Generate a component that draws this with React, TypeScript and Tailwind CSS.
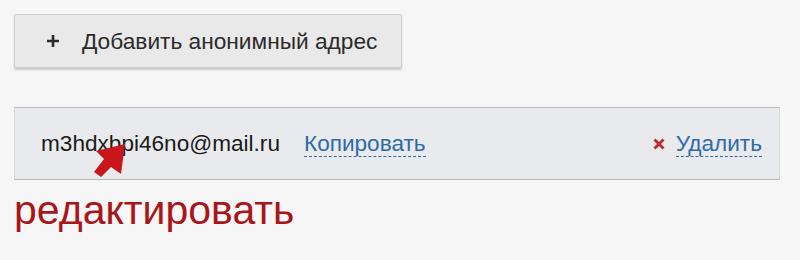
const FONT = { fontFamily: '"Liberation Sans", Arial, sans-serif' };

const PlusIcon = () => (
  <svg width="14" height="14" viewBox="0 0 14 14" className="shrink-0">
    <path d="M7 1v12M1 7h12" stroke="#2b2b2b" strokeWidth="2.6" />
  </svg>
);

const CrossIcon = () => (
  <svg width="12" height="12" viewBox="0 0 12 12" className="shrink-0">
    <path d="M1.5 1.5l9 9M10.5 1.5l-9 9" stroke="#c4262c" strokeWidth="2.8" />
  </svg>
);

// annotation arrow drawn over the address
const PointerArrow = () => (
  <svg width="40" height="40" viewBox="0 0 40 40" className="absolute left-[90px] top-[139px]">
    <polygon points="35,5 6,12 14,20 4,33 11,38 21,28 31,35" fill="#c8161d" />
  </svg>
);

export default function App() {
  return (
    <div className="w-[800px] h-[260px] bg-[#f6f6f6] px-[14px] pt-[14px] relative overflow-hidden" style={FONT}>
      <button className="w-[388px] h-[54px] flex items-center gap-[22px] pl-[31px] bg-[#e9e9e9] border border-[#cfcfcf] rounded-[2px] shadow-[0_2px_2px_rgba(0,0,0,0.18)] text-[#2b2b2b] text-[22.7px]">
        <PlusIcon />
        <span>Добавить анонимный адрес</span>
      </button>

      <div className="mt-[39px] w-[766px] h-[73px] flex items-center pl-[26px] pr-[17px] bg-[#e8eaed] border-y border-[#b9b9b9] border-x border-x-[#d8d8d8] text-[22.6px]">
        <span className="text-[#1a1a1a]">m3hdxbpi46no@mail.ru</span>
        <span className="ml-[24px] text-[#2f6aa6] border-b border-dashed border-[#2f6aa6] leading-[25px]">Копировать</span>
        <div className="ml-auto flex items-center gap-[11px]">
          <CrossIcon />
          <span className="text-[#2f6aa6] border-b border-dashed border-[#2f6aa6] leading-[25px]">Удалить</span>
        </div>
      </div>

      <div className="mt-[10px] text-[41px] leading-[40px] text-[#a8151b]">редактировать</div>

      <PointerArrow />
    </div>
  );
}
